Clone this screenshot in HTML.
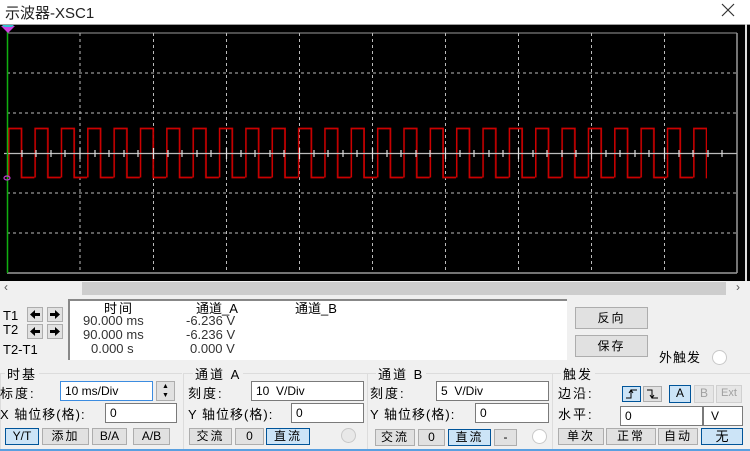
<!DOCTYPE html>
<html><head><meta charset="utf-8"><style>
*{margin:0;padding:0;box-sizing:border-box}
body{width:750px;height:451px;background:#f0f0f0;position:relative;overflow:hidden;font-family:"Liberation Sans","Noto Sans CJK SC",sans-serif;font-size:12px;color:#000}
.a{position:absolute;white-space:nowrap}
.l{font-size:13px;letter-spacing:2px}
.in{position:absolute;background:#fff;border:1px solid #7a7a7a;font-size:12px;padding:1px 4px;line-height:16px}
.bt{position:absolute;background:#e1e1e1;border:1px solid #adadad;text-align:center;font-size:12px;line-height:15px}
.sel{background:#cce4f7;border-color:#005499}
.dis{color:#a0a0a0;background:#e6e6e6;border-color:#d0d0d0}
.grp{position:absolute;border-top:1px solid #dcdcdc;border-left:1px solid #dcdcdc}
.rd{position:absolute;width:15px;height:15px;border-radius:50%;background:#fff;border:1px solid #c8c8c8}
.v{font-size:13px;color:#333}
</style></head><body>
<div class="a" style="left:0;top:0;width:750px;height:25px;background:#fff"></div>
<div class="a" style="left:5px;top:2px;font-size:15px;color:#222">示波器-XSC1</div>
<svg class="a" style="left:721px;top:3px" width="14" height="14"><path d="M1,1 L13,13 M13,1 L1,13" stroke="#333" stroke-width="1.2"/></svg>
<svg class="a" style="left:0;top:24px" width="750" height="257">
<defs><pattern id="sq" x="8" y="0" width="26.35" height="257" patternUnits="userSpaceOnUse">
<path d="M0.7,153.5 L0.7,104.5 L13.5,104.5 L13.5,153.5 L26.85,153.5" fill="none" stroke="#cc0000" stroke-width="1.7"/></pattern></defs>
<rect width="750" height="257" fill="#000"/>
<line x1="0" y1="0.5" x2="750" y2="0.5" stroke="#a0a0a0"/>
<line x1="7" y1="9" x2="737" y2="9" stroke="#9a9a9a"/>
<line x1="7" y1="249" x2="737" y2="249" stroke="#9a9a9a" stroke-width="1.5"/>
<line x1="737" y1="9" x2="737" y2="249" stroke="#9a9a9a" stroke-width="1.5"/>
<line x1="746" y1="0" x2="746" y2="257" stroke="#ddd" stroke-width="2"/>
<g stroke="#bbb" stroke-dasharray="3,3">
<line x1="80" y1="9" x2="80" y2="249"/><line x1="153.5" y1="9" x2="153.5" y2="249"/><line x1="226.5" y1="9" x2="226.5" y2="249"/><line x1="299.5" y1="9" x2="299.5" y2="249"/><line x1="372.5" y1="9" x2="372.5" y2="249"/><line x1="445.5" y1="9" x2="445.5" y2="249"/><line x1="518.5" y1="9" x2="518.5" y2="249"/><line x1="591.5" y1="9" x2="591.5" y2="249"/><line x1="664.5" y1="9" x2="664.5" y2="249"/>
<line x1="7" y1="49" x2="737" y2="49"/><line x1="7" y1="89" x2="737" y2="89"/><line x1="7" y1="169" x2="737" y2="169"/><line x1="7" y1="209" x2="737" y2="209"/>
</g>
<rect x="7" y="102" width="700" height="54" fill="url(#sq)"/>
<line x1="4" y1="129.5" x2="737" y2="129.5" stroke="#bbb" stroke-width="1.3"/>
<g stroke="#ddd" stroke-width="1.2">
<path d="M22,126v7M36,126v7M51,126v7M65,126v7M95,126v7M109,126v7M124,126v7M138,126v7M168,126v7M182,126v7M197,126v7M211,126v7M241,126v7M255,126v7M270,126v7M284,126v7M314,126v7M328,126v7M343,126v7M357,126v7M387,126v7M401,126v7M416,126v7M430,126v7M460,126v7M474,126v7M489,126v7M503,126v7M533,126v7M547,126v7M562,126v7M576,126v7M606,126v7M620,126v7M635,126v7M649,126v7M679,126v7M693,126v7M708,126v7M722,126v7"/>
<path d="M80,124v11M153.5,124v11M226.5,124v11M299.5,124v11M372.5,124v11M445.5,124v11M518.5,124v11M591.5,124v11M664.5,124v11"/>
</g>
<line x1="7.5" y1="3" x2="7.5" y2="249" stroke="#10b010" stroke-width="1.5"/>
<path d="M1,2 L15,2 L8,9 Z" fill="#d040e0"/><path d="M2,1 L14,1 L12,3 L4,3Z" fill="#30c0d0"/>
<ellipse cx="7" cy="154" rx="3" ry="2" fill="none" stroke="#c040d0" stroke-width="1.2"/>
</svg>
<div class="a" style="left:82px;top:282px;width:644px;height:13px;background:#cdcdcd"></div>
<div class="a" style="left:4px;top:280px;font-size:12px;color:#555">‹</div>
<div class="a" style="left:736px;top:280px;font-size:12px;color:#555">›</div>
<div class="a" style="left:3px;top:308px;font-size:13px">T1</div>
<div class="a" style="left:3px;top:322px;font-size:13px">T2</div>
<div class="a" style="left:3px;top:342px;font-size:13px">T2-T1</div>
<div class="bt" style="left:27px;top:307px;width:16px;height:15px"><svg width="14" height="13"><path d="M2,6.5 L7,2 V5 H12 V8 H7 V11 Z" fill="#000"/></svg></div>
<div class="bt" style="left:47px;top:307px;width:16px;height:15px"><svg width="14" height="13"><path d="M12,6.5 L7,2 V5 H2 V8 H7 V11 Z" fill="#000"/></svg></div>
<div class="bt" style="left:27px;top:324px;width:16px;height:15px"><svg width="14" height="13"><path d="M2,6.5 L7,2 V5 H12 V8 H7 V11 Z" fill="#000"/></svg></div>
<div class="bt" style="left:47px;top:324px;width:16px;height:15px"><svg width="14" height="13"><path d="M12,6.5 L7,2 V5 H2 V8 H7 V11 Z" fill="#000"/></svg></div>
<div class="a" style="left:68px;top:299px;width:499px;height:61px;background:#fff;border-left:2px solid #888;border-top:2px solid #888"></div>
<div class="a l" style="left:104px;top:298px">时间</div>
<div class="a l" style="left:196px;top:298px;letter-spacing:0">通道_A</div>
<div class="a l" style="left:295px;top:298px;letter-spacing:0">通道_B</div>
<div class="a v" style="left:83px;top:313px">90.000 ms</div>
<div class="a v" style="left:83px;top:327px">90.000 ms</div>
<div class="a v" style="left:91px;top:341px">0.000 s</div>
<div class="a v" style="left:186px;top:313px">-6.236 V</div>
<div class="a v" style="left:186px;top:327px">-6.236 V</div>
<div class="a v" style="left:190px;top:341px">0.000 V</div>
<div class="bt l" style="left:575px;top:307px;width:73px;height:22px;line-height:20px">反向</div>
<div class="bt l" style="left:575px;top:335px;width:73px;height:22px;line-height:20px">保存</div>
<div class="a l" style="left:659px;top:347px;letter-spacing:1px">外触发</div>
<div class="rd" style="left:712px;top:350px"></div>
<div class="grp" style="left:0;top:373px;width:182px;height:78px"></div>
<div class="grp" style="left:183px;top:373px;width:184px;height:78px"></div>
<div class="grp" style="left:367px;top:373px;width:185px;height:78px"></div>
<div class="grp" style="left:552px;top:373px;width:198px;height:78px"></div>
<div class="a" style="left:0;top:449px;width:750px;height:2px;background:#5aa0e0"></div>
<div class="a l" style="left:5px;top:364px;background:#f0f0f0;padding:0 2px">时基</div>
<div class="a l" style="left:193px;top:364px;background:#f0f0f0;padding:0 2px">通道 A</div>
<div class="a l" style="left:376px;top:364px;background:#f0f0f0;padding:0 2px">通道 B</div>
<div class="a l" style="left:561px;top:364px;background:#f0f0f0;padding:0 2px">触发</div>
<div class="a l" style="left:0;top:383px">标度:</div>
<div class="in" style="left:60px;top:381px;width:93px;height:20px;border-color:#3c8ce0">10 ms/Div</div>
<div class="bt" style="left:156px;top:381px;width:19px;height:20px;font-size:7px;line-height:9px">▲<br>▼</div>
<div class="a l" style="left:0;top:404px;letter-spacing:1px">X 轴位移(格):</div>
<div class="in" style="left:105px;top:403px;width:72px;height:20px">0</div>
<div class="bt sel" style="left:5px;top:428px;width:34px;height:17px">Y/T</div>
<div class="bt l" style="left:42px;top:428px;width:47px;height:17px">添加</div>
<div class="bt" style="left:92px;top:428px;width:35px;height:17px">B/A</div>
<div class="bt" style="left:133px;top:428px;width:37px;height:17px">A/B</div>
<div class="a l" style="left:188px;top:383px">刻度:</div>
<div class="in" style="left:251px;top:381px;width:113px;height:20px">10&nbsp; V/Div</div>
<div class="a l" style="left:188px;top:404px;letter-spacing:1px">Y 轴位移(格):</div>
<div class="in" style="left:291px;top:403px;width:73px;height:20px">0</div>
<div class="bt l" style="left:189px;top:428px;width:43px;height:17px">交流</div>
<div class="bt" style="left:235px;top:428px;width:29px;height:17px">0</div>
<div class="bt sel l" style="left:266px;top:428px;width:44px;height:17px">直流</div>
<div class="rd" style="left:341px;top:428px;background:#e8e8e8"></div>
<div class="a l" style="left:370px;top:383px">刻度:</div>
<div class="in" style="left:436px;top:381px;width:113px;height:20px">5&nbsp; V/Div</div>
<div class="a l" style="left:370px;top:404px;letter-spacing:1px">Y 轴位移(格):</div>
<div class="in" style="left:475px;top:403px;width:74px;height:20px">0</div>
<div class="bt l" style="left:375px;top:429px;width:40px;height:17px">交流</div>
<div class="bt" style="left:418px;top:429px;width:27px;height:17px">0</div>
<div class="bt sel l" style="left:448px;top:429px;width:43px;height:17px">直流</div>
<div class="bt" style="left:494px;top:429px;width:23px;height:17px">-</div>
<div class="rd" style="left:532px;top:429px"></div>
<div class="a l" style="left:558px;top:383px">边沿:</div>
<div class="bt sel" style="left:622px;top:386px;width:19px;height:16px"><svg width="17" height="14"><path d="M3,11 H8 V3 H14 M6,6 L8,3 L10,6" fill="none" stroke="#000"/></svg></div>
<div class="bt" style="left:643px;top:386px;width:19px;height:16px"><svg width="17" height="14"><path d="M3,3 H8 V11 H14 M6,8 L8,11 L10,8" fill="none" stroke="#000"/></svg></div>
<div class="bt sel" style="left:669px;top:385px;width:22px;height:18px">A</div>
<div class="bt dis" style="left:694px;top:385px;width:20px;height:18px">B</div>
<div class="bt dis" style="left:716px;top:385px;width:26px;height:18px;font-size:11px">Ext</div>
<div class="a l" style="left:558px;top:404px">水平:</div>
<div class="in" style="left:620px;top:406px;width:83px;height:20px">0</div>
<div class="in" style="left:703px;top:406px;width:40px;height:20px;padding-left:7px">V</div>
<div class="bt l" style="left:558px;top:428px;width:46px;height:17px">单次</div>
<div class="bt l" style="left:606px;top:428px;width:50px;height:17px">正常</div>
<div class="bt l" style="left:658px;top:428px;width:40px;height:17px">自动</div>
<div class="bt sel" style="left:701px;top:428px;width:42px;height:17px;font-size:13px">无</div>
</body></html>
